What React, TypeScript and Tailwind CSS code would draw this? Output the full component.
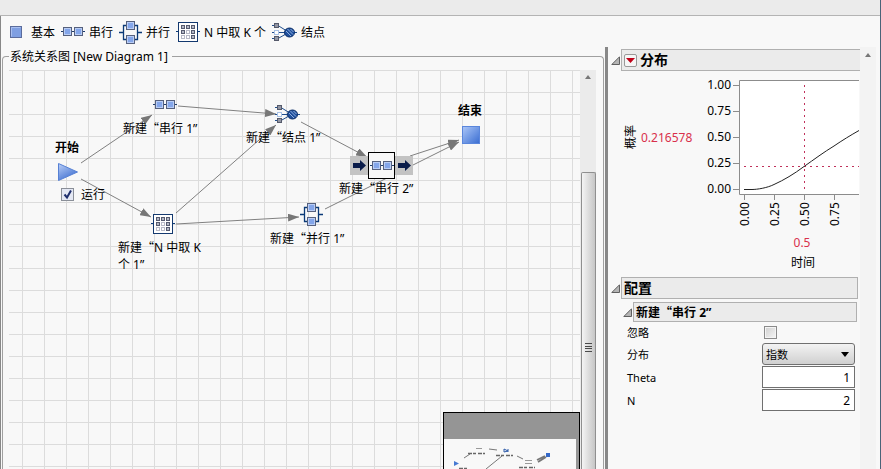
import { useState, ReactNode } from "react";

type Point = { x: number; y: number };
type IconKind = "serial" | "parallel" | "kofn" | "knot";

type DiagramNode = {
  kind: IconKind;
  name: string;
  icon: Point;
  label: Point;
};

type Edge = { from: Point; to: Point };

// Canvas coordinates
const nodes: DiagramNode[] = [
  { kind: "serial", name: "串行 1", icon: { x: 144, y: 30 }, label: { x: 114, y: 49 } },
  { kind: "knot", name: "结点 1", icon: { x: 266, y: 35 }, label: { x: 237, y: 58 } },
  { kind: "parallel", name: "并行 1", icon: { x: 291, y: 133 }, label: { x: 261, y: 159 } },
];

const edges: Edge[] = [
  { from: { x: 72, y: 93 }, to: { x: 143, y: 45 } },
  { from: { x: 72, y: 109 }, to: { x: 142, y: 147 } },
  { from: { x: 169, y: 36 }, to: { x: 267, y: 44 } },
  { from: { x: 167, y: 143 }, to: { x: 267, y: 55 } },
  { from: { x: 167, y: 154 }, to: { x: 290, y: 147 } },
  { from: { x: 292, y: 52 }, to: { x: 358, y: 87 } },
  { from: { x: 401, y: 86 }, to: { x: 450, y: 70 } },
  { from: { x: 316, y: 139 }, to: { x: 450, y: 72 } },
];

const tools: { kind: IconKind; label: string }[] = [
  { kind: "serial", label: "串行" },
  { kind: "parallel", label: "并行" },
  { kind: "kofn", label: "N 中取 K 个" },
  { kind: "knot", label: "结点" },
];

function Block({ x, y }: Point) {
  return (
    <g>
      <rect x={x + 0.5} y={y + 0.5} width="8" height="8" fill="#b9cdf5" stroke="#56617e" />
      <rect x={x + 2} y={y + 2} width="5" height="5" fill="#84a6ea" />
    </g>
  );
}

function SerialIcon() {
  return (
    <svg width="24" height="10" viewBox="0 0 24 10" className="shrink-0">
      <path d="M0 4.5H24" stroke="#1d3c70" />
      <Block x={2} y={0} />
      <Block x={13} y={0} />
    </svg>
  );
}

function ParallelIcon() {
  return (
    <svg width="23" height="23" viewBox="0 0 23 23" className="shrink-0">
      <path
        d="M0 11.5H4.5M18.5 11.5H23M4.5 4.5H18.5V18.5H4.5Z"
        fill="none"
        stroke="#0b3a78"
        strokeWidth="1.3"
      />
      <Block x={7} y={0} />
      <Block x={7} y={14} />
    </svg>
  );
}

const kofnCells = [
  [1, 1, 1],
  [1, 0, 1],
  [0, 0, 1],
];

function KofNIcon() {
  return (
    <svg width="24" height="20" viewBox="0 0 24 20" className="shrink-0">
      <path d="M0 9.5H24" stroke="#0b3a78" />
      <rect x="2.5" y="0.5" width="19" height="19" fill="#fff" stroke="#14396f" />
      {kofnCells.map((row, r) =>
        row.map((on, c) => (
          <rect
            key={`${r}-${c}`}
            x={5.5 + c * 5}
            y={3.5 + r * 5}
            width="3"
            height="3"
            fill={on ? "#b4b8c6" : "#fff"}
            stroke={on ? "#565b70" : "#b8bac8"}
          />
        ))
      )}
    </svg>
  );
}

function KnotIcon() {
  return (
    <svg width="25" height="18" viewBox="0 0 25 18" className="shrink-0">
      <path
        d="M0 2.5H6L14 7.5M0 9.5H25M0 15.5H6L14 11"
        fill="none"
        stroke="#1f4d8c"
      />
      <rect x="2.5" y="0.5" width="4" height="4" fill="#9296a4" stroke="#555a6b" />
      <rect x="2.5" y="7.5" width="4" height="4" fill="#fff" stroke="#a9c2e6" />
      <rect x="2.5" y="13.5" width="4" height="4" fill="#9296a4" stroke="#555a6b" />
      <ellipse cx="17.5" cy="9.5" rx="5" ry="4.5" fill="#1f4f9c" stroke="#0a2c66" />
      <path d="M14 8L19 13M15.5 6L21 11.5M18.5 6L21.5 9" stroke="#9dbbe8" strokeWidth="0.9" />
    </svg>
  );
}

function NodeIcon({ kind }: { kind: IconKind }) {
  if (kind === "serial") return <SerialIcon />;
  if (kind === "parallel") return <ParallelIcon />;
  if (kind === "kofn") return <KofNIcon />;
  return <KnotIcon />;
}

function NewName({ name }: { name: string }) {
  return (
    <>
      新建<span className="font-['Noto_Sans_CJK_SC',sans-serif]">“</span>
      {name}”
    </>
  );
}

function Placed({ at, children }: { at: Point; children: ReactNode }) {
  return (
    <div className="absolute whitespace-nowrap" style={{ left: at.x, top: at.y }}>
      {children}
    </div>
  );
}

function Toolbar() {
  return (
    <div className="flex h-[31px] shrink-0 items-center gap-1.5 pt-px pl-[9px]">
      <button type="button" className="flex items-center gap-[9px]">
        <svg width="12" height="12" viewBox="0 0 12 12">
          <rect x="0.5" y="0.5" width="11" height="11" fill="#7f9fe2" stroke="#5b6c9c" />
          <path d="M1.5 10.5V1.5H10.5" fill="none" stroke="#a9bff0" />
        </svg>
        基本
      </button>
      {tools.map((tool) => (
        <button key={tool.kind} type="button" className="flex items-center gap-1">
          <NodeIcon kind={tool.kind} />
          {tool.label}
        </button>
      ))}
    </div>
  );
}

function ArrowBox() {
  return (
    <div className="flex h-[19px] w-[18px] items-center justify-center bg-[#c3c3c3]">
      <svg width="13" height="11" viewBox="0 0 13 11">
        <path d="M0 3H7V0L13 5.5L7 11V8H0Z" fill="#0a1c4a" />
      </svg>
    </div>
  );
}

function Overview() {
  return (
    <div className="absolute right-0 bottom-0 h-[57px] w-[137px] border border-b-0 border-black bg-[#959595] pt-[26px] pr-[3px]">
      <svg viewBox="0 0 132 30" className="block h-[30px] w-full bg-[#f8f8f8]">
        <g stroke="#777" strokeWidth="1" fill="none">
          <path d="M20 19L26 15M45 10L53 11M42 30L58 17M73 17L79 20" />
          <path d="M93 21L101 17M94 23L102 18" strokeWidth="1.8" />
        </g>
        <g stroke="#666" strokeWidth="1.4" strokeDasharray="4 1 3 2">
          <path d="M24 14.5H41M52 16.5H69M75 28.5H91M15 29.5H24" />
        </g>
        <path d="M32 9.5H38M81 21.5H88M81 24.5H88" stroke="#999" />
        <path d="M10 22L15 24.5L10 27Z" fill="#4679d2" />
        <path d="M60 10V13M60 10L64 12L60 13M64 10V13" stroke="#2d5aa8" fill="none" />
        <rect x="102" y="14" width="4" height="4" fill="#3569c8" />
      </svg>
    </div>
  );
}

function Canvas() {
  const [run, setRun] = useState(true);

  return (
    <div className="relative min-w-0 flex-1 overflow-hidden bg-[linear-gradient(to_right,#dcdcdc_1px,transparent_1px),linear-gradient(to_bottom,#dcdcdc_1px,transparent_1px)] bg-[size:22px_22px] bg-[position:13px_0px]">
      <svg className="absolute inset-0 h-full w-full">
        <defs>
          <marker
            id="arrow"
            markerUnits="userSpaceOnUse"
            markerWidth="11"
            markerHeight="8"
            refX="11"
            refY="4"
            orient="auto"
          >
            <path d="M0 0L11 4L0 8Z" fill="#777" />
          </marker>
        </defs>
        {edges.map((e, i) => (
          <line
            key={i}
            x1={e.from.x}
            y1={e.from.y}
            x2={e.to.x}
            y2={e.to.y}
            stroke="#808080"
            markerEnd="url(#arrow)"
          />
        ))}
      </svg>

      {/* Start */}
      <Placed at={{ x: 46, y: 69 }}>
        <b>开始</b>
      </Placed>
      <Placed at={{ x: 49, y: 93 }}>
        <svg width="20" height="18" viewBox="0 0 20 18">
          <defs>
            <linearGradient id="blue" x1="0" y1="0" x2="0.6" y2="1">
              <stop offset="0" stopColor="#bcd0f8" />
              <stop offset="1" stopColor="#3f6fd0" />
            </linearGradient>
          </defs>
          <path d="M0.5 0.5L19.5 9L0.5 17.5Z" fill="url(#blue)" stroke="#5680d4" />
        </svg>
      </Placed>
      <Placed at={{ x: 52, y: 116 }}>
        <label className="flex items-center gap-[7px]">
          <span className="grid">
            <input
              type="checkbox"
              checked={run}
              onChange={(e) => setRun(e.target.checked)}
              className="peer col-start-1 row-start-1 size-[13px] appearance-none border border-[#8a8f98] bg-[#e4e8f4]"
            />
            <svg
              viewBox="0 0 13 13"
              className="pointer-events-none invisible col-start-1 row-start-1 size-[13px] peer-checked:visible"
            >
              <path d="M3.5 6.5L6 9.5L10 2.5" fill="none" stroke="#1f2f6e" strokeWidth="2" />
            </svg>
          </span>
          运行
        </label>
      </Placed>

      {nodes.map((node) => (
        <div key={node.name}>
          <Placed at={node.icon}>
            <NodeIcon kind={node.kind} />
          </Placed>
          <Placed at={node.label}>
            <NewName name={node.name} />
          </Placed>
        </div>
      ))}

      <Placed at={{ x: 142, y: 144 }}>
        <KofNIcon />
      </Placed>
      <Placed at={{ x: 109, y: 168 }}>
        新建<span className="font-['Noto_Sans_CJK_SC',sans-serif]">“</span>N 中取 K
        <br />个 1”
      </Placed>

      {/* Selected node */}
      <Placed at={{ x: 341, y: 82 }}>
        <div className="flex items-center">
          <ArrowBox />
          <div className="flex h-[27px] w-[27px] items-center justify-center border border-black bg-[#f8f8f8]">
            <SerialIcon />
          </div>
          <ArrowBox />
        </div>
      </Placed>
      <Placed at={{ x: 330, y: 109 }}>
        <NewName name="串行 2" />
      </Placed>

      {/* End */}
      <Placed at={{ x: 449, y: 32 }}>
        <b>结束</b>
      </Placed>
      <Placed at={{ x: 453, y: 56 }}>
        <div className="size-[18px] border border-[#5a86dc] bg-linear-to-br from-[#a9c4f6] to-[#3d6fd2]" />
      </Placed>

      <Overview />
    </div>
  );
}

function ScrollUp() {
  return (
    <svg width="6" height="4" viewBox="0 0 6 4">
      <path d="M0 4L3 0L6 4Z" fill="#777" />
    </svg>
  );
}

function CanvasScrollbar() {
  return (
    <div className="flex w-4 shrink-0 flex-col items-center bg-[#ebebeb]">
      <div className="flex h-[102px] pt-[5px]">
        <ScrollUp />
      </div>
      <div className="flex w-[15px] flex-1 justify-center rounded-t-xs border border-b-0 border-[#8f8f8f] bg-linear-to-r from-[#f4f4f4] to-[#c6c6c6] pt-[170px]">
        <svg width="7" height="9" viewBox="0 0 7 9">
          <path d="M0 0.5H7M0 3.5H7M0 5.5H7M0 8.5H7" stroke="#4a4a4a" />
        </svg>
      </div>
    </div>
  );
}

function Disclosure() {
  return (
    <svg width="9" height="9" viewBox="0 0 9 9" className="shrink-0">
      <path d="M0.8 8.5L8.5 0.8V8.5Z" fill="#b5b5b5" stroke="#606060" />
    </svg>
  );
}

const yTicks = ["1.00", "0.75", "0.50", "0.25", "0.00"];
const xTicks = ["0.00", "0.25", "0.50", "0.75"];

function DistributionChart() {
  return (
    <svg width="251" height="206" viewBox="0 0 251 206" className="block text-xs">
      <rect x="131" y="9" width="120" height="115" fill="#fff" />
      <path d="M251 9.5H131.5V123.5H251" fill="none" stroke="#8c8c8c" />
      {yTicks.map((t, i) => (
        <g key={t}>
          <path d={`M125 ${14.5 + i * 26}H131`} stroke="#8c8c8c" />
          <text x="123" y={18 + i * 26} textAnchor="end">
            {t}
          </text>
        </g>
      ))}
      {xTicks.map((t, i) => (
        <g key={t}>
          <path d={`M${136.5 + i * 30} 124V129`} stroke="#8c8c8c" />
          <text transform={`translate(${141 + i * 30} 155) rotate(-90)`}>{t}</text>
        </g>
      ))}
      <path d="M196.5 14V119M136 95.5H251" stroke="#c0305a" strokeDasharray="2 4" />
      <path
        d="M136 118.5H144C149 118.5 159 117 166 113.5C176 109 186 103 196 95.5C206 88.5 216 81 226 75C234 69.5 243 64 251 59.5"
        fill="none"
        stroke="#222"
      />
      <text transform="translate(27 78) rotate(-90)">概率</text>
      <text x="33" y="71" fill="#d9304c">
        0.216578
      </text>
      <text x="194" y="176" textAnchor="middle" fill="#d9304c">
        0.5
      </text>
      <text x="195" y="196" textAnchor="middle">
        时间
      </text>
    </svg>
  );
}

function SettingsForm() {
  const [ignored, setIgnored] = useState(false);
  const [distribution, setDistribution] = useState("指数");
  const [theta, setTheta] = useState("1");
  const [n, setN] = useState("2");

  const box = "h-[22px] w-full border border-[#707070] bg-white px-1 text-right text-xs";

  return (
    <form className="grid grid-cols-[1fr_93px] items-center gap-y-px pr-[5px] pl-4 text-[11px]">
      <label htmlFor="ignore">忽略</label>
      <div className="flex h-5 items-center pl-0.5">
        <input
          id="ignore"
          type="checkbox"
          checked={ignored}
          onChange={(e) => setIgnored(e.target.checked)}
          className="size-[13px] appearance-none border border-[#8a8a8a] bg-linear-to-br from-[#cfcfcf] to-[#f6f6f6] shadow-[inset_0_0_0_1px_#f4f4f4] checked:bg-[#1f2f6e]"
        />
      </div>

      <label htmlFor="distribution">分布</label>
      <div className="grid items-center">
        <select
          id="distribution"
          value={distribution}
          onChange={(e) => setDistribution(e.target.value)}
          className="col-start-1 row-start-1 h-[22px] w-full appearance-none rounded-[3px] border border-[#707070] bg-linear-to-b from-[#f3f3f3] to-[#d0d0d0] px-[3px]"
        >
          <option>指数</option>
        </select>
        <svg
          width="8"
          height="5"
          viewBox="0 0 8 5"
          className="pointer-events-none col-start-1 row-start-1 mr-1.5 justify-self-end"
        >
          <path d="M0 0H8L4 5Z" fill="#000" />
        </svg>
      </div>

      <label htmlFor="theta">Theta</label>
      <input
        id="theta"
        type="text"
        value={theta}
        onChange={(e) => setTheta(e.target.value)}
        className={box}
      />

      <label htmlFor="n">N</label>
      <input
        id="n"
        type="text"
        value={n}
        onChange={(e) => setN(e.target.value)}
        className={box}
      />
    </form>
  );
}

function SidePanel() {
  return (
    <aside className="flex w-[275px] shrink-0 border-l-[3px] border-[#888]">
      <div className="min-w-0 flex-1 pt-0.5 pl-[3px]">
        <div className="flex items-center gap-px">
          <Disclosure />
          <h2 className="flex h-[22px] flex-1 items-center gap-[3px] border border-r-0 border-[#b0b0b0] bg-[#ebebeb] pl-0.5 text-sm font-bold">
            <button
              type="button"
              aria-label="分布"
              className="flex size-[13px] items-center justify-center rounded-xs border border-[#999] bg-[#f6f6f6]"
            >
              <svg width="9" height="5" viewBox="0 0 9 5">
                <path d="M0 0H9L4.5 5Z" fill="#c00018" />
              </svg>
            </button>
            分布
          </h2>
        </div>

        <div className="-ml-[3px]">
          <DistributionChart />
        </div>

        <div className="flex items-center gap-px pr-0.5">
          <Disclosure />
          <h2 className="flex h-[22px] flex-1 items-center border border-[#b0b0b0] bg-[#ebebeb] pl-0.5 text-sm font-bold">
            配置
          </h2>
        </div>

        <div className="mt-[3px] flex items-center gap-px pr-[3px] pl-3">
          <Disclosure />
          <h3 className="flex h-5 flex-1 items-center border border-[#b0b0b0] bg-[#ebebeb] pl-0.5 font-bold">
            <span>
              <NewName name="串行 2" />
            </span>
          </h3>
        </div>

        <SettingsForm />
      </div>

      <div className="mr-1 flex w-4 shrink-0 justify-center bg-[#f3f3f3] pt-1.5">
        <ScrollUp />
      </div>
    </aside>
  );
}

export default function App() {
  return (
    <div className="flex h-screen flex-col overflow-hidden border-r border-[#4a6378] bg-[#f8f8f8] font-['Noto_Sans','Noto_Sans_CJK_SC',sans-serif] text-xs leading-[17px] text-black">
      <div className="h-4 shrink-0 border-b border-[#b4b4b4] bg-[#ebebeb]" />
      <div className="flex min-h-0 flex-1 flex-col border-l border-[#888]">
        <Toolbar />
        <div className="flex min-h-0 flex-1">
          <main className="flex min-w-0 flex-1 flex-col pt-px pr-px pl-px">
            <fieldset className="flex min-h-0 min-w-0 flex-1 flex-col rounded-t border border-b-0 border-[#a0a0a0] pr-[7px] pl-1.5">
              <legend className="pr-1 pl-px">系统关系图 [New Diagram 1]</legend>
              <div className="mt-[5px] flex min-h-0 flex-1">
                <Canvas />
                <CanvasScrollbar />
              </div>
            </fieldset>
          </main>
          <SidePanel />
        </div>
      </div>
    </div>
  );
}
